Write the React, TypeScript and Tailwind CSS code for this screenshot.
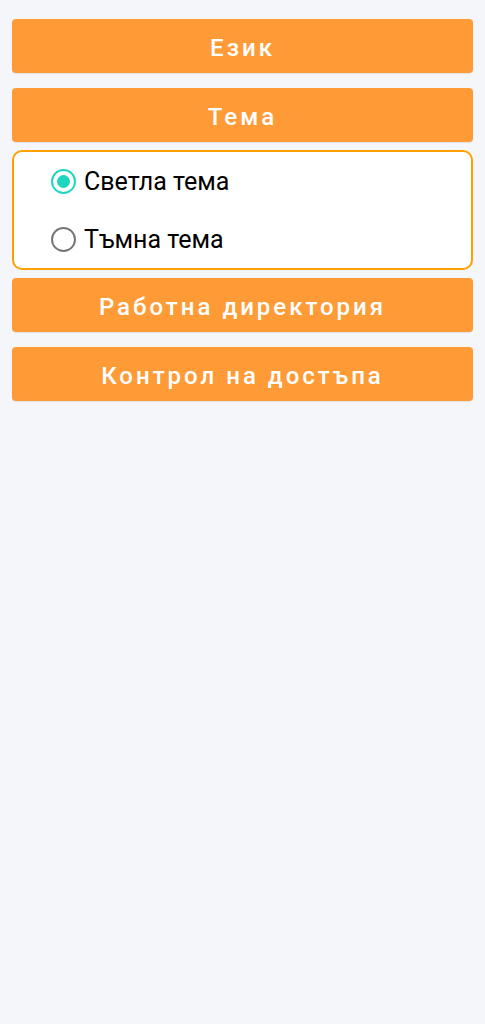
import React from "react";

function Btn({ label }: { label: string }) {
  return (
    <button className="w-full h-[54px] rounded-[4px] bg-[#FF9B37] text-white text-[24px] leading-none font-medium tracking-[3px] flex items-center justify-center pt-[3px] shadow-[0_1px_1px_rgba(0,0,0,0.08)]">
      {label}
    </button>
  );
}

function Radio({ label, checked }: { label: string; checked: boolean }) {
  return (
    <div className="flex items-center h-[60px]">
      <div
        className={
          "w-[25px] h-[25px] rounded-full border-[2.5px] flex items-center justify-center " +
          (checked ? "border-[#1ED6BF]" : "border-[#767676]")
        }
      >
        {checked && <div className="w-[13px] h-[13px] rounded-full bg-[#1ED6BF]" />}
      </div>
      <span className="ml-[8px] text-[25px] leading-none text-black">{label}</span>
    </div>
  );
}

export default function App() {
  return (
    <div
      className="min-h-[1024px] bg-[#F5F6FA] px-[12px] pt-[19px]"
      style={{ fontFamily: "Roboto, 'Noto Sans', sans-serif" }}
    >
      <Btn label="Език" />
      <div className="mt-[15px]">
        <Btn label="Тема" />
      </div>
      <div className="mt-[8px] h-[120px] rounded-[10px] border-2 border-[#FFA000] bg-white pl-[37px] flex flex-col justify-center">
        <Radio label="Светла тема" checked />
        <Radio label="Тъмна тема" checked={false} />
      </div>
      <div className="mt-[8px]">
        <Btn label="Работна директория" />
      </div>
      <div className="mt-[15px]">
        <Btn label="Контрол на достъпа" />
      </div>
    </div>
  );
}
